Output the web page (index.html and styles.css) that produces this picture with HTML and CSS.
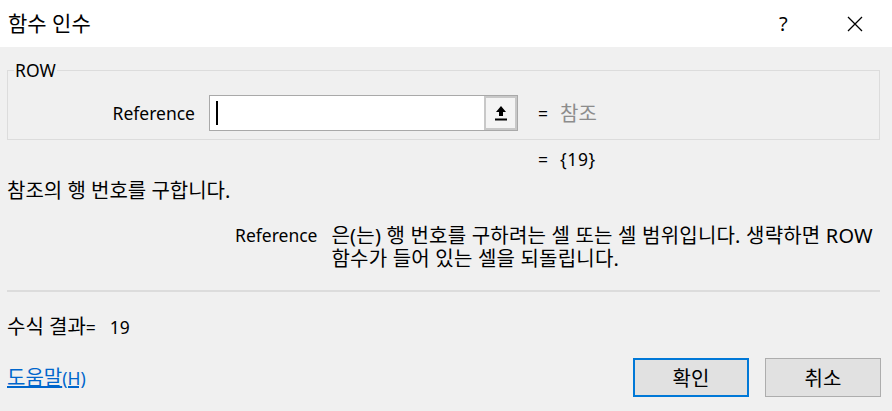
FILE: index.html
```html
<!DOCTYPE html>
<html lang="ko">
<head>
<meta charset="UTF-8">
<title>함수 인수</title>
<link rel="stylesheet" href="styles.css">
</head>
<body>

<div class="dialog">
    <div class="titlebar">
        <span class="title">함수 인수</span>
        <span class="help">?</span>
        <span class="close">
            <svg width="16" height="16" viewBox="0 0 16 16"><path d="M1 1 L15 15 M15 1 L1 15" stroke="#000" stroke-width="1.3" fill="none"/></svg>
        </span>
    </div>

    <div class="content">
        <fieldset class="args">
            <legend class="lat">ROW</legend>
            <div class="arg-row">
                <span class="arg-label lat">Reference</span>
                <div class="ref-input">
                    <div class="ref-field"><span class="caret"></span></div>
                    <div class="ref-btn">
                        <svg width="12" height="16" viewBox="0 0 12 16"><path d="M6 1 L11 7 L8 7 L8 11 L4 11 L4 7 L1 7 Z" fill="#000"/><rect x="0" y="13.5" width="12" height="2" fill="#000"/></svg>
                    </div>
                </div>
                <span class="eq lat">=</span>
                <span class="hint">참조</span>
            </div>
        </fieldset>

        <div class="result-row lat">
            <span class="eq">=</span>
            <span class="value">{19}</span>
        </div>

        <p class="summary">참조의 행 번호를 구합니다.</p>

        <div class="arg-help">
            <span class="arg-help-name lat">Reference</span>
            <div class="arg-help-text">
                <div>은(는) 행 번호를 구하려는 셀 또는 셀 범위입니다. 생략하면 ROW</div>
                <div>함수가 들어 있는 셀을 되돌립니다.</div>
            </div>
        </div>

        <hr class="sep">

        <p class="formula">수식 결과<span class="lat">=</span><span class="lat value-gap">19</span></p>

        <div class="footer">
            <a class="help-link" href="#">도움말<span class="lat">(H)</span></a>
            <div class="buttons">
                <button class="btn btn-default">확인</button>
                <button class="btn">취소</button>
            </div>
        </div>
    </div>
</div>

</body>
</html>
```

FILE: styles.css
```css
/* Excel "function arguments" dialog */
html, body {
    margin: 0;
    padding: 0;
}
body {
    width: 892px;
    height: 411px;
    overflow: hidden;
    background-color: #f0f0f0;
    font-family: "Noto Sans", "Noto Sans CJK KR", sans-serif;
    font-size: 20px;
    line-height: 23px;
    color: #000;
}
/* latin text runs narrower than hangul in the original font */
.lat {
    font-size: 17.5px;
}
.titlebar {
    height: 47px;
    background-color: #fff;
    display: flex;
    align-items: center;
}
.title {
    font-size: 21px;
    margin-left: 8px;
    flex: 1;
}
.help {
    font-size: 20px;
    width: 12px;
    margin-right: 56px;
}
.close {
    display: flex;
    margin-right: 29px;
}
.content {
    padding: 0 12px 0 7px;
}
.args {
    margin: 13px 0 0 0;
    padding: 15px 0 8px 0;
    border: 1px solid #dcdcdc;
    min-width: 0;
}
.args legend {
    padding: 0 1px;
    margin-left: 6px;
    line-height: 20px;
}
.arg-row {
    display: flex;
    align-items: center;
    height: 36px;
}
.arg-label {
    width: 187px;
    text-align: right;
    margin-right: 14px;
}
.ref-input {
    display: flex;
    width: 309px;
    height: 36px;
    box-sizing: border-box;
    border: 1px solid #a9a9a9;
    background-color: #fff;
}
.ref-field {
    flex: 1;
    display: flex;
    align-items: center;
    padding-left: 6px;
}
.caret {
    width: 2px;
    height: 24px;
    background-color: #000;
}
.ref-btn {
    width: 33px;
    box-sizing: border-box;
    border: 2px solid #c8c8c8;
    background-color: #f4f4f4;
    display: flex;
    align-items: center;
    justify-content: center;
}
.eq {
    margin-left: 20px;
    margin-right: 12px;
}
.hint {
    color: #8c8c8c;
}
.result-row {
    margin-top: 8px;
    padding-left: 511px;
    display: flex;
    line-height: 23px;
}
.value {
    letter-spacing: 0.6px;
}
.summary {
    margin: 8px 0 0 0;
}
.arg-help {
    margin-top: 22px;
    display: flex;
}
.arg-help-name {
    margin-left: 228px;
    margin-right: 14px;
}
.arg-help-text {
    letter-spacing: 0.2px;
}
.sep {
    margin: 20px 0 0 0;
    border: 0;
    border-top: 2px solid #dcdcdc;
}
.formula {
    margin: 23px 0 0 0;
}
.value-gap {
    margin-left: 14px;
}
.footer {
    margin-top: 19px;
    display: flex;
    align-items: center;
    justify-content: space-between;
    margin-right: -1px;
}
.help-link {
    color: #0066cc;
    text-decoration: underline;
}
.buttons {
    display: flex;
    gap: 16px;
}
.btn {
    width: 116px;
    height: 39px;
    font-family: inherit;
    font-size: 20px;
    background-color: #e1e1e1;
    border: 1px solid #adadad;
    padding: 0;
}
.btn-default {
    border: 2px solid #0078d7;
}
```
